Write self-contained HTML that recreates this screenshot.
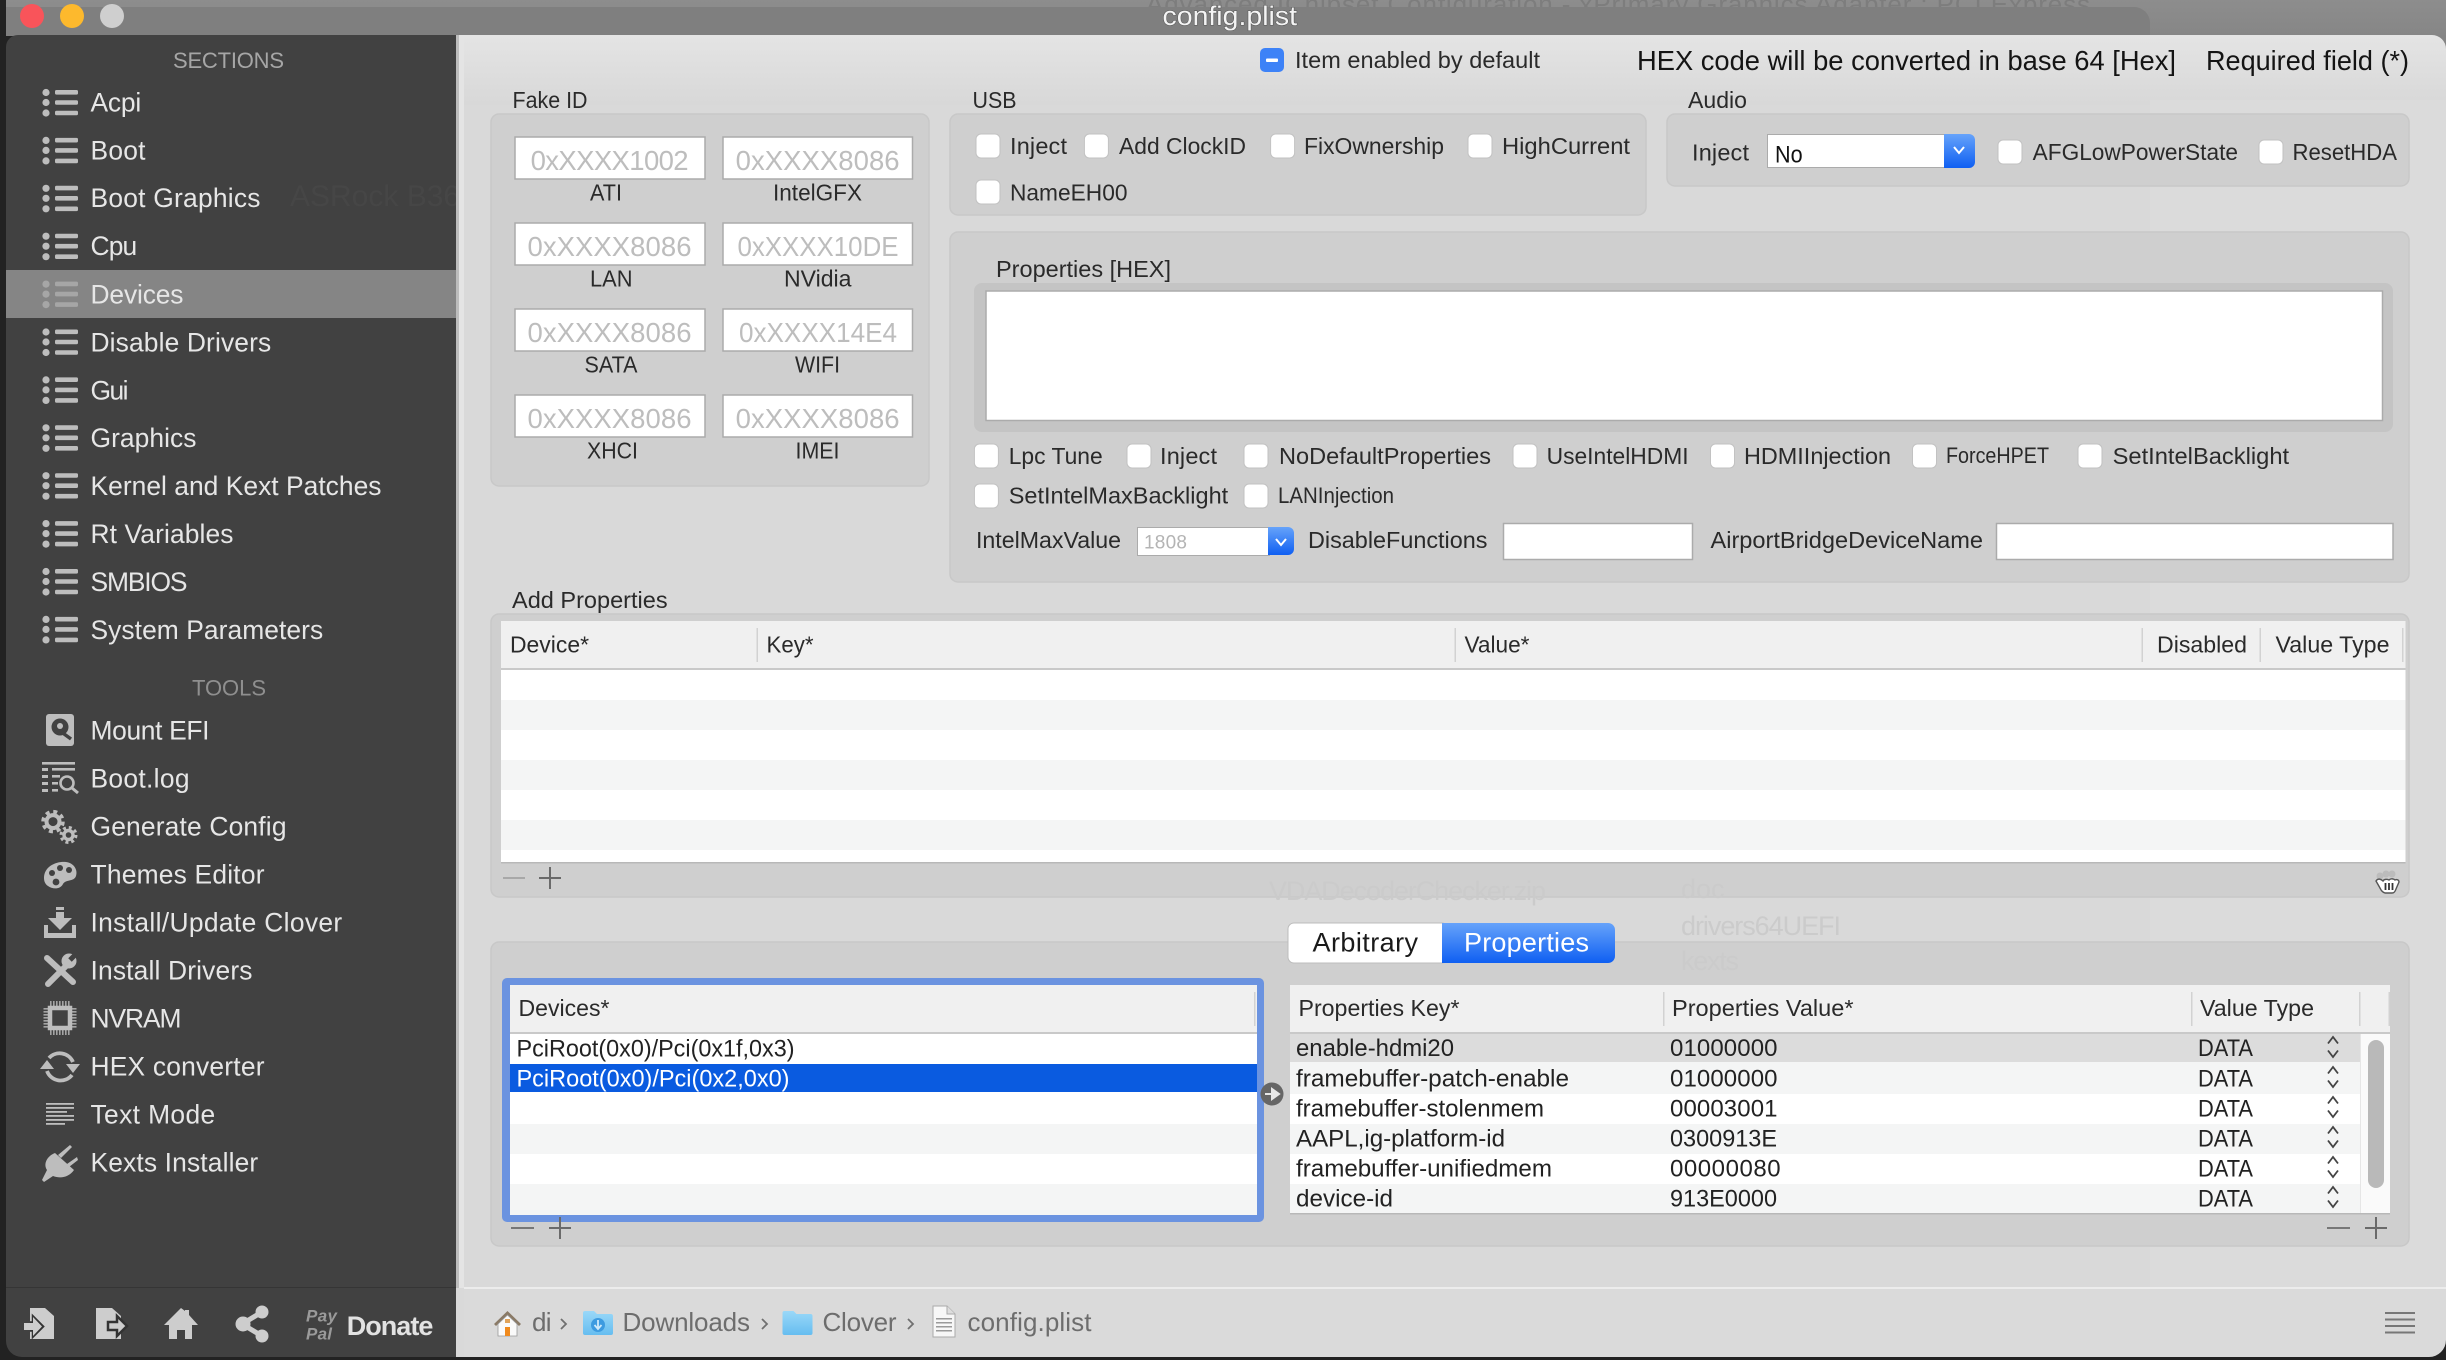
<!DOCTYPE html>
<html lang="en"><head><meta charset="utf-8"><title>config.plist</title>
<style>
html,body{margin:0;padding:0;background:#222;width:2446px;height:1360px;overflow:hidden}
svg{display:block;font-family:"Liberation Sans",Arial,sans-serif}
.s{font-size:26.4px;fill:#e6e6e6}
.m{font-size:23.5px;fill:#2a2a2a}
.t{font-size:24px;fill:#222}
.p{font-size:27.5px;fill:#bdbdbd}
.c{font-size:26px;fill:#6d6d6d}
.g{font-size:27px;fill:#cbcbcb}
</style></head><body>
<svg xmlns="http://www.w3.org/2000/svg" width="2446" height="1360" viewBox="0 0 2446 1360">
<defs>
<linearGradient id="blue" x1="0" y1="0" x2="0" y2="1"><stop offset="0" stop-color="#66a3fa"/><stop offset="1" stop-color="#0f5ff2"/></linearGradient>
<linearGradient id="bar" x1="0" y1="0" x2="0" y2="1"><stop offset="0" stop-color="#8d8d8d"/><stop offset="1" stop-color="#868686"/></linearGradient>
<linearGradient id="top" x1="0" y1="0" x2="0" y2="1"><stop offset="0" stop-color="#e4e4e4"/><stop offset="1" stop-color="#d8d8d8"/></linearGradient>
<linearGradient id="fold" x1="0" y1="0" x2="0" y2="1"><stop offset="0" stop-color="#9ad8f8"/><stop offset="1" stop-color="#66bdf0"/></linearGradient>
<clipPath id="side"><rect x="6" y="35" width="450" height="230"/></clipPath>
<clipPath id="tb"><rect x="6" y="0" width="2440" height="7"/></clipPath>
<g id="l" fill="#bdbdbd"><circle cx="46" cy="-10" r="3.6"/><circle cx="46" cy="0" r="3.6"/><circle cx="46" cy="10.5" r="3.6"/><rect x="55" y="-12.5" width="23" height="4.6" rx="1.5"/><rect x="55" y="-2.3" width="23" height="4.6" rx="1.5"/><rect x="55" y="8.2" width="23" height="4.6" rx="1.5"/></g>
<rect id="cb" width="24" height="24" rx="5" fill="#fff" stroke="#c2c2c2" stroke-width="1"/>
<path id="st" d="M-5-3.5 0-10 5-3.5M-5 3.5 0 10 5 3.5" fill="none" stroke="#444" stroke-width="1.8"/>
</defs>

<!-- window -->
<rect width="2446" height="1360" fill="#222"/>
<rect x="6" y="0" width="2440" height="36" fill="url(#bar)"/>
<g clip-path="url(#tb)"><text x="1146" y="13" font-size="26" fill="#7d7d7d" textLength="944">Advanced IChipset Configuration - xPrimary Graphics Adapter : PCI Express</text></g>
<path d="M6 7H2134a16 16 0 0 1 16 16V36H6z" fill="#7f7f7f"/>
<rect x="456" y="35" width="1990" height="1322" fill="#d9d9d9"/>
<rect x="456" y="35" width="1990" height="70" fill="url(#top)"/>
<path d="M2432 35h14v14a14 14 0 0 0-14-14z" fill="#858585"/>
<rect x="2150" y="100" width="296" height="1190" fill="#dbdbdb"/>
<circle cx="32" cy="16" r="12" fill="#f9545a"/><circle cx="72" cy="16" r="12" fill="#fdb92d"/><circle cx="112" cy="16" r="12" fill="#cfcfcf"/>
<text x="1162.500" y="25" font-size="27" fill="#f4f4f4" textLength="134.500" lengthAdjust="spacingAndGlyphs" style="paint-order:stroke" stroke="#555" stroke-width="1">config.plist</text>

<!-- sidebar -->
<path d="M6 47a12 12 0 0 1 12-12H456V1357H22a16 16 0 0 1-16-16z" fill="#414141"/>
<g clip-path="url(#side)"><text x="290" y="206" font-size="30" fill="#464646">ASRock B360M</text></g>
<rect x="456" y="35" width="3" height="1253" fill="#bdbdbd"/><rect x="459" y="35" width="5" height="1253" fill="#e4e4e4"/>
<rect x="6" y="270" width="450" height="48" fill="#858585"/>
<rect x="6" y="1287" width="450" height="1" fill="#353535"/>
<text x="173" y="68" font-size="22" fill="#a6a6a6" textLength="111">SECTIONS</text>
<text x="192" y="695.500" font-size="22" fill="#8f8f8f" textLength="74">TOOLS</text>
<use href="#l" y="102.5"/><use href="#l" y="150.4"/><use href="#l" y="198.3"/><use href="#l" y="246.2"/><use href="#l" y="294.1" opacity=".6"/><use href="#l" y="342"/><use href="#l" y="389.9"/><use href="#l" y="437.8"/><use href="#l" y="485.7"/><use href="#l" y="533.6"/><use href="#l" y="581.5"/><use href="#l" y="629.4"/>
<text class="s" x="90.500" y="111.400" textLength="50.7">Acpi</text>
<text class="s" x="90.500" y="159.300" textLength="55">Boot</text>
<text class="s" x="90.500" y="207.200" textLength="170">Boot Graphics</text>
<text class="s" x="90.500" y="255.100" textLength="46.7">Cpu</text>
<text class="s" x="90.500" y="303.500" textLength="93">Devices</text>
<text class="s" x="90.500" y="351.400" textLength="180.7">Disable Drivers</text>
<text class="s" x="90.500" y="399.300" textLength="38">Gui</text>
<text class="s" x="90.500" y="447.200" textLength="106">Graphics</text>
<text class="s" x="90.500" y="495.100" textLength="291">Kernel and Kext Patches</text>
<text class="s" x="90.500" y="543" textLength="143">Rt Variables</text>
<text class="s" x="90.500" y="590.900" textLength="97">SMBIOS</text>
<text class="s" x="90.500" y="638.800" textLength="232.7">System Parameters</text>
<text class="s" x="90.500" y="739.400" textLength="119">Mount EFI</text>
<text class="s" x="90.500" y="787.400" textLength="99">Boot.log</text>
<text class="s" x="90.500" y="835.400" textLength="196">Generate Config</text>
<text class="s" x="90.500" y="883.400" textLength="174">Themes Editor</text>
<text class="s" x="90.500" y="931.400" textLength="251.7">Install/Update Clover</text>
<text class="s" x="90.500" y="979.400" textLength="162">Install Drivers</text>
<text class="s" x="90.500" y="1027.400" textLength="91">NVRAM</text>
<text class="s" x="90.500" y="1075.400" textLength="174">HEX converter</text>
<text class="s" x="90.500" y="1123.400" textLength="124.7">Text Mode</text>
<text class="s" x="90.500" y="1171.400" textLength="167.7">Kexts Installer</text>

<!-- tool icons -->
<g fill="#bdbdbd" stroke="none">
<rect x="46" y="714" width="28" height="32" rx="3"/><circle cx="60" cy="727" r="8.5" fill="#414141"/><circle cx="60" cy="726" r="3"/><path d="M60 731l11 8" stroke="#414141" stroke-width="3.5"/>
<rect x="42" y="762" width="33" height="2.6"/><rect x="42" y="768" width="6" height="3"/><rect x="52" y="768" width="23" height="2.6"/><rect x="42" y="775" width="6" height="3"/><rect x="52" y="775" width="8" height="2.6"/><rect x="42" y="782" width="6" height="3"/><rect x="52" y="782" width="6" height="2.6"/><rect x="42" y="789" width="6" height="3"/><rect x="52" y="789" width="6" height="2.6"/>
<circle cx="67" cy="783" r="6.5" fill="none" stroke="#bdbdbd" stroke-width="2.6"/><path d="M72 788l6 5" stroke="#bdbdbd" stroke-width="3"/>
<g fill="none" stroke="#bdbdbd"><circle cx="53" cy="821.6" r="6.5" stroke-width="4"/><circle cx="53" cy="821.6" r="10" stroke-width="3.5" stroke-dasharray="4 3.85"/><circle cx="68.5" cy="835" r="4.5" stroke-width="3.4"/><circle cx="68.5" cy="835" r="7.5" stroke-width="3" stroke-dasharray="3 2.9"/></g>
<path d="M44 878C44 866 57 861 66 862 74 863 78 870 76 876 74 882 66 879 63 884 60 890 52 889 48 886 45 884 44 881 44 878Z"/><g fill="#414141"><circle cx="52" cy="873" r="3"/><circle cx="60" cy="868" r="3"/><circle cx="69" cy="870" r="3"/><circle cx="56" cy="882" r="3.4"/></g>
<path d="M44 925h4v8h24v-8h4v13H44z"/><rect x="56" y="907" width="8" height="3"/><path d="M56 912h8v6h8L60 930 48 918h8z"/>
<g stroke="#bdbdbd" stroke-linecap="round" fill="none"><path d="M47 958l26 24" stroke-width="6"/><path d="M48 984l20-20" stroke-width="6"/></g><circle cx="69" cy="961" r="7.500"/><path d="M70 960l8-8" stroke="#414141" stroke-width="5"/>
<g fill="none" stroke="#bdbdbd"><rect x="50" y="1008" width="20" height="20" stroke-width="4.5"/><path d="M50 1003.500h20M50 1032.500h20M46 1008v20M74 1008v20" stroke-width="5" stroke-dasharray="1.600 1.400" opacity=".8"/></g>
<g fill="none" stroke="#bdbdbd" stroke-width="3.800"><path d="M49 1058A14.500 14.500 0 0 1 73 1062"/><path d="M72 1075A14.500 14.500 0 0 1 47 1071"/></g><path d="M66 1064h14l-7 9zM40 1069h14l-7-9z"/>
<g><rect x="46" y="1103" width="28" height="1.800"/><rect x="46" y="1107" width="28" height="1.800"/><rect x="46" y="1111" width="21" height="1.800"/><rect x="46" y="1115" width="28" height="1.800"/><rect x="46" y="1119" width="28" height="1.800"/><rect x="46" y="1123" width="19" height="1.800"/></g>
<path d="M47 1170c-4-6 0-14 8-17l19 17c-5 7-13 9-21 6l-9 6-2-2z"/><path d="M58 1155l12-10 2 2-11 11zM67 1164l10-7 1 3-9 7z"/>
</g>

<!-- sidebar footer icons -->
<g fill="#cdcdcd">
<path d="M30 1308h15l9 8v23H30z"/>
<path d="M30 1322.500h3v-6l10 10-10 10v-6h-3" fill="none" stroke="#333" stroke-width="2.500"/>
<path d="M24 1323h9v-6l9 9.500-9 9.500v-6h-9z"/>
<path d="M96 1308h16l9 8v23H96z"/>
<path d="M108 1322h9v-6l10 10-10 10v-6h-9z" stroke="#333" stroke-width="2.500"/>
<path d="M181 1308l4 3v-1h4v5l9 10h-6v14h-7v-9h-8v9h-8v-14h-5z"/>
<g stroke="#cdcdcd"><path d="M242 1324l20-12M242 1324l20 12" stroke-width="5" fill="none"/><circle cx="243" cy="1324" r="7"/><circle cx="262" cy="1312" r="6"/><circle cx="262" cy="1336" r="6"/></g>
</g>
<text x="306" y="1321.500" font-size="17" font-weight="bold" font-style="italic" fill="#9a9a9a" textLength="31">Pay</text>
<text x="306" y="1339.500" font-size="17" font-weight="bold" font-style="italic" fill="#9a9a9a" textLength="26">Pal</text>
<text x="346.700" y="1335" font-size="27" font-weight="bold" fill="#e2e2e2" textLength="86.700">Donate</text>

<!-- top row -->
<rect x="1260" y="48" width="24" height="24" rx="5" fill="#3d82f7"/><rect x="1266" y="58.500" width="12" height="3.500" rx="1" fill="#fff"/>
<text class="m" x="1295" y="68" textLength="245">Item enabled by default</text>
<text x="1637" y="70" font-size="27.500" fill="#141414" textLength="539" lengthAdjust="spacingAndGlyphs">HEX code will be converted in base 64 [Hex]</text>
<text x="2206" y="70" font-size="27.500" fill="#141414" textLength="203" lengthAdjust="spacingAndGlyphs">Required field (*)</text>

<!-- panels -->
<g fill="#cfcfcf" stroke="#c8c8c8" stroke-width="1.500">
<rect x="491" y="114" width="438" height="372" rx="8"/>
<rect x="950" y="114" width="696" height="101" rx="8"/>
<rect x="1667" y="114" width="742" height="72" rx="8"/>
<rect x="950" y="232" width="1459" height="350" rx="8"/>
<rect x="491" y="614" width="1918" height="283" rx="8"/>
<rect x="491" y="942" width="1918" height="304" rx="8"/>
</g>
<text class="g" x="1269" y="900" textLength="277">VDADecoderChecker.zip</text>
<text class="g" x="1681" y="898">doc</text>
<text class="g" x="1681" y="935" textLength="160">drivers64UEFI</text>
<text class="g" x="1681" y="970" textLength="58">kexts</text>
<text class="m" x="512.500" y="108" textLength="75" lengthAdjust="spacingAndGlyphs">Fake ID</text>
<text class="m" x="972.500" y="108" textLength="44" lengthAdjust="spacingAndGlyphs">USB</text>
<text class="m" x="1688" y="108" textLength="59" lengthAdjust="spacingAndGlyphs">Audio</text>

<!-- fake id -->
<g fill="#fff" stroke="#ababab" stroke-width="1.500">
<rect x="515" y="137" width="190" height="42"/><rect x="723" y="137" width="189.500" height="42"/>
<rect x="515" y="223" width="190" height="42"/><rect x="723" y="223" width="189.500" height="42"/>
<rect x="515" y="309" width="190" height="42"/><rect x="723" y="309" width="189.500" height="42"/>
<rect x="515" y="395" width="190" height="42"/><rect x="723" y="395" width="189.500" height="42"/>
</g>
<text class="p" x="530.600" y="170" textLength="158">0xXXXX1002</text><text class="p" x="735.600" y="170" textLength="164">0xXXXX8086</text>
<text class="p" x="527.500" y="256" textLength="164">0xXXXX8086</text><text class="p" x="737.500" y="256" textLength="161" lengthAdjust="spacingAndGlyphs">0xXXXX10DE</text>
<text class="p" x="527.500" y="342" textLength="164">0xXXXX8086</text><text class="p" x="739" y="342" textLength="158" lengthAdjust="spacingAndGlyphs">0xXXXX14E4</text>
<text class="p" x="527.500" y="428" textLength="164">0xXXXX8086</text><text class="p" x="735.600" y="428" textLength="164">0xXXXX8086</text>
<text class="m" x="590" y="200.500" textLength="32" lengthAdjust="spacingAndGlyphs">ATI</text><text class="m" x="773" y="200.500" textLength="89" lengthAdjust="spacingAndGlyphs">IntelGFX</text>
<text class="m" x="590" y="286.500" textLength="42.500" lengthAdjust="spacingAndGlyphs">LAN</text><text class="m" x="784" y="286.500" textLength="67.500" lengthAdjust="spacingAndGlyphs">NVidia</text>
<text class="m" x="584.500" y="372.500" textLength="53" lengthAdjust="spacingAndGlyphs">SATA</text><text class="m" x="795" y="372.500" textLength="45" lengthAdjust="spacingAndGlyphs">WIFI</text>
<text class="m" x="587" y="458.500" textLength="51" lengthAdjust="spacingAndGlyphs">XHCI</text><text class="m" x="795.500" y="458.500" textLength="44" lengthAdjust="spacingAndGlyphs">IMEI</text>

<!-- usb -->
<use href="#cb" x="976" y="134"/><text class="m" x="1010" y="154" textLength="57">Inject</text>
<use href="#cb" x="1084.400" y="134"/><text class="m" x="1119" y="154" textLength="127" lengthAdjust="spacingAndGlyphs">Add ClockID</text>
<use href="#cb" x="1270.600" y="134"/><text class="m" x="1304" y="154" textLength="140" lengthAdjust="spacingAndGlyphs">FixOwnership</text>
<use href="#cb" x="1468" y="134"/><text class="m" x="1502" y="154" textLength="128" lengthAdjust="spacingAndGlyphs">HighCurrent</text>
<use href="#cb" x="976" y="180"/><text class="m" x="1010" y="200.500" textLength="117.500" lengthAdjust="spacingAndGlyphs">NameEH00</text>

<!-- audio -->
<text class="m" x="1692" y="160.700" textLength="57">Inject</text>
<rect x="1767.500" y="134.500" width="180" height="33" fill="#fff" stroke="#ababab"/>
<path d="M1944 134h25a6 6 0 0 1 6 6v22a6 6 0 0 1-6 6h-25z" fill="url(#blue)"/>
<path d="M1954 147l5 6 5-6" fill="none" stroke="#fff" stroke-width="2"/>
<text x="1775" y="162.500" font-size="24" fill="#111" textLength="27.600" lengthAdjust="spacingAndGlyphs">No</text>
<use href="#cb" x="1998" y="140"/><text class="m" x="2032.600" y="160" textLength="205.400" lengthAdjust="spacingAndGlyphs">AFGLowPowerState</text>
<use href="#cb" x="2259" y="140"/><text class="m" x="2292.500" y="160" textLength="104.500" lengthAdjust="spacingAndGlyphs">ResetHDA</text>

<!-- properties hex -->
<text class="m" x="996" y="277" textLength="175" lengthAdjust="spacingAndGlyphs">Properties [HEX]</text>
<rect x="974" y="283" width="1419" height="149" rx="8" fill="#c4c4c4"/>
<rect x="986" y="291" width="1396.500" height="129.500" fill="#fff" stroke="#ababab" stroke-width="1.500"/>
<use href="#cb" x="974.400" y="444"/><text class="m" x="1008.700" y="464" textLength="94" lengthAdjust="spacingAndGlyphs">Lpc Tune</text>
<use href="#cb" x="1127" y="444"/><text class="m" x="1160" y="464" textLength="57">Inject</text>
<use href="#cb" x="1244" y="444"/><text class="m" x="1279" y="464" textLength="212" lengthAdjust="spacingAndGlyphs">NoDefaultProperties</text>
<use href="#cb" x="1513" y="444"/><text class="m" x="1546.600" y="464" textLength="142" lengthAdjust="spacingAndGlyphs">UseIntelHDMI</text>
<use href="#cb" x="1710.500" y="444"/><text class="m" x="1744" y="464" textLength="147" lengthAdjust="spacingAndGlyphs">HDMIInjection</text>
<use href="#cb" x="1912.500" y="444"/><text class="m" style="font-size:22px" x="1946" y="463" textLength="103" lengthAdjust="spacingAndGlyphs">ForceHPET</text>
<use href="#cb" x="2078" y="444"/><text class="m" x="2112.600" y="464" textLength="176.500" lengthAdjust="spacingAndGlyphs">SetIntelBacklight</text>
<use href="#cb" x="974.400" y="484"/><text class="m" x="1008.700" y="503.600" textLength="219.500" lengthAdjust="spacingAndGlyphs">SetIntelMaxBacklight</text>
<use href="#cb" x="1244" y="484"/><text class="m" style="font-size:22px" x="1278" y="503" textLength="116" lengthAdjust="spacingAndGlyphs">LANInjection</text>
<text class="m" x="976" y="548" textLength="145" lengthAdjust="spacingAndGlyphs">IntelMaxValue</text>
<rect x="1137.500" y="527.500" width="132" height="28" fill="#fff" stroke="#ababab"/>
<path d="M1268 527h20a6 6 0 0 1 6 6v16a6 6 0 0 1-6 6h-20z" fill="url(#blue)"/>
<path d="M1276 539l5 6 5-6" fill="none" stroke="#fff" stroke-width="2"/>
<text x="1144" y="548.400" font-size="19" fill="#b4b4b4" textLength="43">1808</text>
<text class="m" x="1308" y="548" textLength="179.500" lengthAdjust="spacingAndGlyphs">DisableFunctions</text>
<rect x="1503.500" y="523.500" width="189" height="36" fill="#fff" stroke="#ababab" stroke-width="1.500"/>
<text class="m" x="1710.500" y="548" textLength="272.500" lengthAdjust="spacingAndGlyphs">AirportBridgeDeviceName</text>
<rect x="1996.500" y="523.500" width="396.500" height="36" fill="#fff" stroke="#ababab" stroke-width="1.500"/>

<!-- add properties -->
<text class="m" x="512" y="608" textLength="155.600" lengthAdjust="spacingAndGlyphs">Add Properties</text>
<rect x="501" y="621" width="1904.500" height="242" fill="#fff"/>
<rect x="501" y="621" width="1904.500" height="47.500" fill="#f0f0f0"/>
<rect x="501" y="668" width="1904.500" height="2" fill="#c9c9c9"/>
<g fill="#f4f5f5"><rect x="501" y="700" width="1904.500" height="30"/><rect x="501" y="760" width="1904.500" height="30"/><rect x="501" y="820" width="1904.500" height="30"/></g>
<rect x="501" y="862" width="1904.500" height="1.500" fill="#b8b8b8"/>
<g fill="#d2d2d2"><rect x="756.500" y="628" width="1.500" height="34"/><rect x="1454.500" y="628" width="1.500" height="34"/><rect x="2141.500" y="628" width="1.500" height="34"/><rect x="2259.500" y="628" width="1.500" height="34"/><rect x="2402" y="628" width="1.500" height="34"/></g>
<text class="m" x="510" y="652.500" textLength="79" lengthAdjust="spacingAndGlyphs">Device*</text>
<text class="m" x="766.500" y="652.500" textLength="47" lengthAdjust="spacingAndGlyphs">Key*</text>
<text class="m" x="1464.500" y="652.500" textLength="65" lengthAdjust="spacingAndGlyphs">Value*</text>
<text class="m" x="2157" y="652.500" textLength="90" lengthAdjust="spacingAndGlyphs">Disabled</text>
<text class="m" x="2275.500" y="652.500" textLength="114" lengthAdjust="spacingAndGlyphs">Value Type</text>
<rect x="503" y="877" width="22" height="2" fill="#a8a8a8"/>
<path d="M539 878h22M550 867v22" stroke="#6a6a6a" stroke-width="2"/>
<!-- hand cursor -->
<g fill="#bcbcbc"><circle cx="2380" cy="876" r="3.500"/><circle cx="2386" cy="874" r="3.500"/><circle cx="2392" cy="874" r="3.500"/></g>
<path d="M2376 881c2-3 5-2 7 0 1-2 4-2 6-1 2-2 5-1 6 0 2-1 4 0 4 2l-3 7c-1 3-2 4-4 4h-7c-3-1-4-3-5-5z" fill="#fff" stroke="#555" stroke-width="1.400"/>
<path d="M2385.500 883v7M2389 883v7M2392.500 883v7" stroke="#333" stroke-width="1.800"/>

<!-- tabs -->
<rect x="1288" y="923" width="160" height="40" rx="6" fill="#fff" stroke="#bcbcbc"/>
<path d="M1442 923h166a7 7 0 0 1 7 7v26a7 7 0 0 1-7 7h-166z" fill="url(#blue)"/>
<text x="1312.500" y="951.700" font-size="27" fill="#1a1a1a" textLength="105.500">Arbitrary</text>
<text x="1464" y="951.700" font-size="27" fill="#fff" textLength="125">Properties</text>

<!-- devices -->
<rect x="502" y="978" width="762" height="244" rx="5" fill="#6b93e0"/>
<rect x="510" y="985" width="747" height="230" fill="#fff"/>
<rect x="510" y="985" width="747" height="47" fill="#f0f0f0"/>
<rect x="510" y="1032" width="747" height="2" fill="#c9c9c9"/>
<rect x="1254" y="992" width="1.500" height="34" fill="#d2d2d2"/>
<rect x="510" y="1064" width="747" height="28" fill="#0a5be0"/>
<rect x="510" y="1124" width="747" height="30" fill="#f4f5f5"/><rect x="510" y="1184" width="747" height="31" fill="#f4f5f5"/>
<text class="m" x="518.500" y="1016" textLength="91" lengthAdjust="spacingAndGlyphs">Devices*</text>
<text class="t" x="516.500" y="1056.600" textLength="278" lengthAdjust="spacingAndGlyphs">PciRoot(0x0)/Pci(0x1f,0x3)</text>
<text class="t" style="fill:#fff" x="516.500" y="1086.500" textLength="273" lengthAdjust="spacingAndGlyphs">PciRoot(0x0)/Pci(0x2,0x0)</text>
<rect x="511" y="1227" width="23" height="2" fill="#777"/>
<path d="M549 1228h22M560 1217v22" stroke="#6a6a6a" stroke-width="2"/>
<circle cx="1272" cy="1094" r="11.500" fill="#666"/><path d="M1265 1094h7v-5l7 5-7 5v-5" fill="#e8e8e8" stroke="#e8e8e8" stroke-width="2"/>

<!-- properties table -->
<rect x="1290" y="985" width="1100" height="229" fill="#fff"/>
<rect x="1290" y="985" width="1100" height="47" fill="#f0f0f0"/>
<rect x="1290" y="1032" width="1100" height="2" fill="#c9c9c9"/>
<rect x="1290" y="1034" width="1070" height="28" fill="#dcdcdc"/>
<g fill="#f4f5f5"><rect x="1290" y="1062" width="1070" height="32"/><rect x="1290" y="1124" width="1070" height="30"/><rect x="1290" y="1184" width="1070" height="30"/></g>
<rect x="2360" y="1034" width="30" height="180" fill="#fafafa"/><rect x="2360" y="1034" width="1" height="180" fill="#e6e6e6"/>
<rect x="2368" y="1040" width="16" height="148" rx="8" fill="#b9b9b9"/>
<g fill="#d2d2d2"><rect x="1663" y="992" width="1.500" height="34"/><rect x="2191" y="992" width="1.500" height="34"/><rect x="2359" y="992" width="1.500" height="34"/><rect x="2388.500" y="992" width="1.500" height="34"/></g>
<rect x="1290" y="1213" width="1100" height="1.500" fill="#b8b8b8"/>
<text class="m" x="1298.500" y="1016" textLength="161" lengthAdjust="spacingAndGlyphs">Properties Key*</text>
<text class="m" x="1672" y="1016" textLength="181.500" lengthAdjust="spacingAndGlyphs">Properties Value*</text>
<text class="m" x="2200" y="1016" textLength="114" lengthAdjust="spacingAndGlyphs">Value Type</text>
<text class="t" x="1296" y="1056" textLength="158" lengthAdjust="spacingAndGlyphs">enable-hdmi20</text><text class="t" x="1670" y="1056" textLength="107.500">01000000</text><text class="t" x="2198" y="1056" textLength="55" lengthAdjust="spacingAndGlyphs">DATA</text>
<text class="t" x="1296" y="1086.700" textLength="273" lengthAdjust="spacingAndGlyphs">framebuffer-patch-enable</text><text class="t" x="1670" y="1086.700" textLength="107.500">01000000</text><text class="t" x="2198" y="1086.700" textLength="55" lengthAdjust="spacingAndGlyphs">DATA</text>
<text class="t" x="1296" y="1116.700" textLength="248" lengthAdjust="spacingAndGlyphs">framebuffer-stolenmem</text><text class="t" x="1670" y="1116.700" textLength="107.500">00003001</text><text class="t" x="2198" y="1116.700" textLength="55" lengthAdjust="spacingAndGlyphs">DATA</text>
<text class="t" x="1296" y="1146.700" textLength="209" lengthAdjust="spacingAndGlyphs">AAPL,ig-platform-id</text><text class="t" x="1670" y="1146.700" textLength="107" lengthAdjust="spacingAndGlyphs">0300913E</text><text class="t" x="2198" y="1146.700" textLength="55" lengthAdjust="spacingAndGlyphs">DATA</text>
<text class="t" x="1296" y="1176.700" textLength="256" lengthAdjust="spacingAndGlyphs">framebuffer-unifiedmem</text><text class="t" x="1670" y="1176.700" textLength="110.600">00000080</text><text class="t" x="2198" y="1176.700" textLength="55" lengthAdjust="spacingAndGlyphs">DATA</text>
<text class="t" x="1296" y="1206.700" textLength="97" lengthAdjust="spacingAndGlyphs">device-id</text><text class="t" x="1670" y="1206.700" textLength="107" lengthAdjust="spacingAndGlyphs">913E0000</text><text class="t" x="2198" y="1206.700" textLength="55" lengthAdjust="spacingAndGlyphs">DATA</text>
<use href="#st" x="2333" y="1047"/><use href="#st" x="2333" y="1077"/><use href="#st" x="2333" y="1107"/><use href="#st" x="2333" y="1137"/><use href="#st" x="2333" y="1167"/><use href="#st" x="2333" y="1197"/>
<rect x="2327" y="1227" width="23" height="2" fill="#777"/>
<path d="M2365 1228h22M2376 1217v22" stroke="#6a6a6a" stroke-width="2"/>

<!-- bottom bar -->
<rect x="464" y="1288" width="1982" height="69" fill="#dadada"/>
<rect x="464" y="1287" width="1982" height="2" fill="#ececec"/>
<path d="M2446 1340v17h-17a17 17 0 0 0 17-17z" fill="#222"/>
<g>
<path d="M494 1324l13.500-13 13.500 13-2 2-11.500-11-11.500 11z" fill="#8a7a66"/>
<path d="M498 1324l9.500-9 9.500 9v12h-19z" fill="#fafafa" stroke="#999" stroke-width=".8"/>
<rect x="505" y="1327" width="5" height="9" fill="#f08a1d"/><rect x="505" y="1319" width="5" height="4" fill="#e0a35a"/>
</g>
<text class="c" x="532" y="1331" textLength="19.500">di</text>
<path d="M561 1319l5 5-5 5" fill="none" stroke="#707070" stroke-width="1.800"/>
<path d="M583 1313a2 2 0 0 1 2-2h9l3 3h14a2 2 0 0 1 2 2v17a2 2 0 0 1-2 2h-26a2 2 0 0 1-2-2z" fill="url(#fold)"/>
<circle cx="598" cy="1325" r="7" fill="#3d9be0"/><path d="M598 1320v8M594.500 1325l3.500 4 3.500-4" fill="none" stroke="#cfeafa" stroke-width="1.800"/>
<text class="c" x="622.500" y="1331" textLength="127.500">Downloads</text>
<path d="M762 1319l5 5-5 5" fill="none" stroke="#707070" stroke-width="1.800"/>
<path d="M782.500 1313a2 2 0 0 1 2-2h9l3 3h14a2 2 0 0 1 2 2v17a2 2 0 0 1-2 2h-26a2 2 0 0 1-2-2z" fill="url(#fold)"/>
<text class="c" x="822.500" y="1331" textLength="74">Clover</text>
<path d="M908 1319l5 5-5 5" fill="none" stroke="#707070" stroke-width="1.800"/>
<path d="M933 1306h14l8 8v23h-22z" fill="#f7f7f7" stroke="#aaa"/><path d="M947 1306v8h8" fill="#ddd" stroke="#aaa"/>
<g fill="#9a9a9a"><rect x="936" y="1318" width="16" height="1.500"/><rect x="936" y="1322" width="16" height="1.500"/><rect x="936" y="1326" width="16" height="1.500"/><rect x="936" y="1330" width="16" height="1.500"/></g>
<text class="c" x="967.500" y="1331" textLength="124">config.plist</text>
<g fill="#777"><rect x="2385" y="1312" width="30" height="2"/><rect x="2385" y="1318.500" width="30" height="2"/><rect x="2385" y="1325" width="30" height="2"/><rect x="2385" y="1331.500" width="30" height="2"/></g>
</svg>
</body></html>
